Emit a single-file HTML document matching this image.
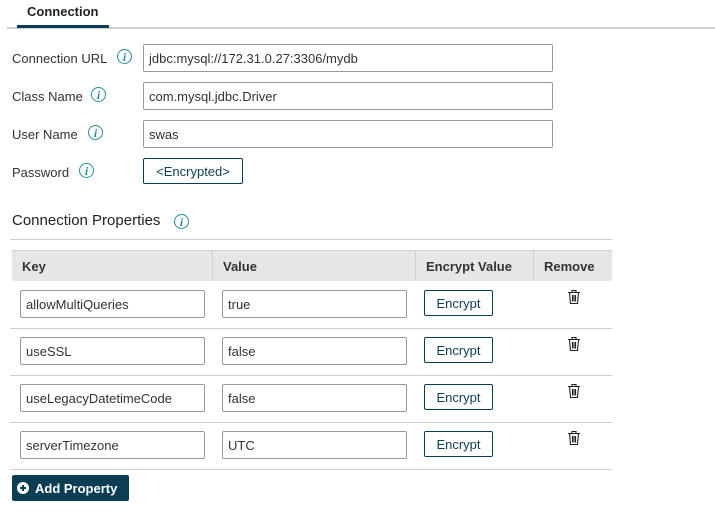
<!DOCTYPE html>
<html><head><style>
body{margin:0;width:715px;height:522px;background:#fff;font-family:"Liberation Sans",sans-serif;font-size:13px;color:#333;position:relative;overflow:hidden}
.a{position:absolute}
.inp{position:absolute;border:1px solid #999;border-radius:2px;box-sizing:border-box;height:28px;line-height:28px;padding-left:5px;font-size:13px;color:#333;background:#fff}
.btn{position:absolute;border:1px solid #0b3d55;border-radius:2px;box-sizing:border-box;text-align:center;color:#0b3d55;font-size:13px;background:#fff}
.lbl{position:absolute;left:12px;font-size:13px;color:#333}
.info{position:absolute;width:13px;height:13px;border:1.3px solid #2a8a9a;border-radius:50%;color:#2a8a9a;font:italic bold 12px "Liberation Serif",serif;text-align:center;line-height:14px}
.hl{position:absolute;left:10px;width:602px;height:1px;background:#cfcfcf}
.th{position:absolute;top:251px;height:30px;line-height:31px;font-weight:bold;font-size:13px;color:#333;padding-left:10px;box-sizing:border-box;border-right:1px solid #d0d0d0}
</style></head><body>
<div class="a" style="left:27px;top:4px;font-size:13px;font-weight:bold;color:#222">Connection</div>
<div class="a" style="left:7px;top:27px;width:708px;height:2px;background:#d0d0d0"></div>
<div class="a" style="left:17px;top:25px;width:92px;height:3px;background:#0b3d55"></div>

<div class="lbl" style="top:51px">Connection URL</div><div class="info" style="left:117px;top:49px">i</div>
<div class="inp" style="left:143px;top:44px;width:410px">jdbc:mysql://172.31.0.27:3306/mydb</div>
<div class="lbl" style="top:89px">Class Name</div><div class="info" style="left:91px;top:87px">i</div>
<div class="inp" style="left:143px;top:82px;width:410px">com.mysql.jdbc.Driver</div>
<div class="lbl" style="top:127px">User Name</div><div class="info" style="left:88px;top:125px">i</div>
<div class="inp" style="left:143px;top:120px;width:410px">swas</div>
<div class="lbl" style="top:165px">Password</div><div class="info" style="left:79px;top:163px">i</div>
<div class="btn" style="left:143px;top:158px;width:100px;height:26px;line-height:26px">&lt;Encrypted&gt;</div>

<div class="a" style="left:12px;top:212px;font-size:15px;color:#222">Connection Properties</div>
<div class="info" style="left:174px;top:214px">i</div>
<div class="hl" style="top:239px"></div>

<div class="a" style="left:12px;top:250px;width:600px;height:31px;background:#e6e6e6;border-top:1px solid #d0d0d0;box-sizing:border-box"></div>
<div class="th" style="left:12px;width:201px">Key</div>
<div class="th" style="left:213px;width:203px">Value</div>
<div class="th" style="left:416px;width:118px">Encrypt Value</div>
<div class="th" style="left:534px;width:78px;border:none">Remove</div>

<div class="inp" style="left:20px;top:290px;width:185px">allowMultiQueries</div>
<div class="inp" style="left:222px;top:290px;width:185px">true</div>
<div class="btn" style="left:424px;top:290px;width:69px;height:26px;line-height:26px">Encrypt</div>
<svg class="a" style="left:567px;top:289px" width="14" height="16" viewBox="0 0 14 16"><path d="M1 3.5h12M5 3.5V1.5h4v2M2.5 3.5l1 11h7l1-11M5.5 6v6.5M7 6v6.5M8.5 6v6.5" stroke="#222" stroke-width="1.1" fill="none"/></svg>
<div class="hl" style="top:328px"></div>

<div class="inp" style="left:20px;top:337px;width:185px">useSSL</div>
<div class="inp" style="left:222px;top:337px;width:185px">false</div>
<div class="btn" style="left:424px;top:337px;width:69px;height:26px;line-height:26px">Encrypt</div>
<svg class="a" style="left:567px;top:336px" width="14" height="16" viewBox="0 0 14 16"><path d="M1 3.5h12M5 3.5V1.5h4v2M2.5 3.5l1 11h7l1-11M5.5 6v6.5M7 6v6.5M8.5 6v6.5" stroke="#222" stroke-width="1.1" fill="none"/></svg>
<div class="hl" style="top:375px"></div>

<div class="inp" style="left:20px;top:384px;width:185px">useLegacyDatetimeCode</div>
<div class="inp" style="left:222px;top:384px;width:185px">false</div>
<div class="btn" style="left:424px;top:384px;width:69px;height:26px;line-height:26px">Encrypt</div>
<svg class="a" style="left:567px;top:383px" width="14" height="16" viewBox="0 0 14 16"><path d="M1 3.5h12M5 3.5V1.5h4v2M2.5 3.5l1 11h7l1-11M5.5 6v6.5M7 6v6.5M8.5 6v6.5" stroke="#222" stroke-width="1.1" fill="none"/></svg>
<div class="hl" style="top:422px"></div>

<div class="inp" style="left:20px;top:431px;width:185px">serverTimezone</div>
<div class="inp" style="left:222px;top:431px;width:185px">UTC</div>
<div class="btn" style="left:424px;top:431px;width:69px;height:26px;line-height:26px">Encrypt</div>
<svg class="a" style="left:567px;top:430px" width="14" height="16" viewBox="0 0 14 16"><path d="M1 3.5h12M5 3.5V1.5h4v2M2.5 3.5l1 11h7l1-11M5.5 6v6.5M7 6v6.5M8.5 6v6.5" stroke="#222" stroke-width="1.1" fill="none"/></svg>
<div class="hl" style="top:469px"></div>

<div class="a" style="left:12px;top:475px;width:117px;height:26px;background:#0b3d55;border-radius:2px;color:#fff;font-weight:bold;font-size:13px;line-height:27px">
<svg style="position:absolute;left:5px;top:7px" width="12" height="12" viewBox="0 0 12 12"><circle cx="6" cy="6" r="6" fill="#fff"/><path d="M6 3v6M3 6h6" stroke="#0b3d55" stroke-width="2"/></svg>
<span style="position:absolute;left:23px">Add Property</span></div>
</body></html>
